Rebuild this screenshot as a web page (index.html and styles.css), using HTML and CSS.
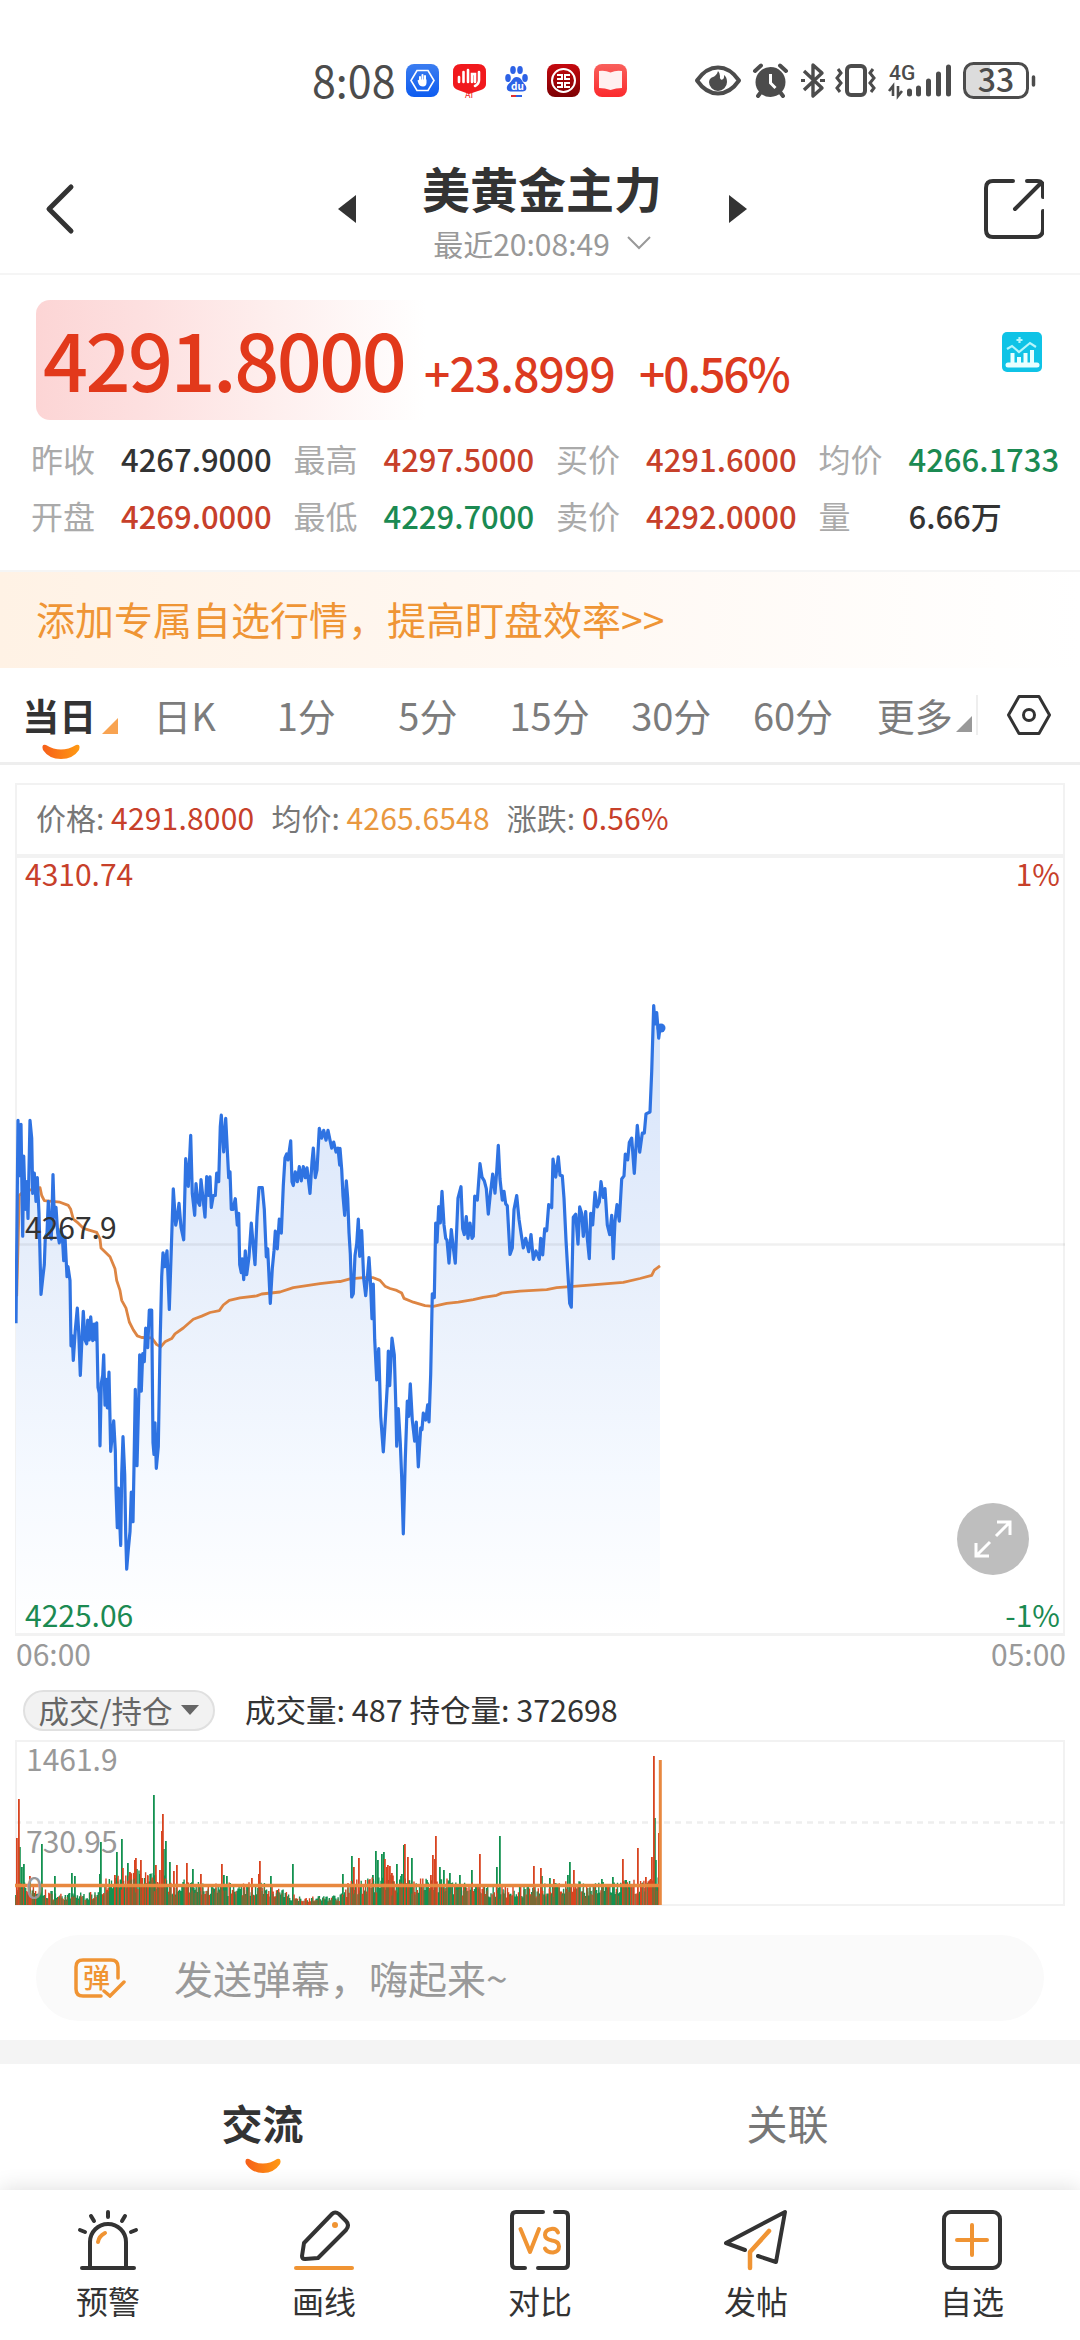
FILE: index.html
```html
<!DOCTYPE html>
<html lang="zh-CN">

<head>
    <meta charset="UTF-8">
    <meta name="viewport" content="width=device-width, initial-scale=1.0">
    <title>美黄金主力</title>
    <link rel="stylesheet" href="styles.css">
</head>

<body>
    <div class="status-bar">
        <span class="clock">8:08</span>
        <svg class="status-icons" width="680" height="50" viewBox="400 56 680 50">
            <defs>
                <linearGradient id="gBlue" x1="0" y1="0" x2="0" y2="1">
                    <stop offset="0" stop-color="#3b7df0" />
                    <stop offset="1" stop-color="#0d5cf0" />
                </linearGradient>
                <linearGradient id="gDark" x1="0" y1="0" x2="0" y2="1">
                    <stop offset="0" stop-color="#c5090f" />
                    <stop offset="1" stop-color="#7c0003" />
                </linearGradient>
                <linearGradient id="gRed" x1="0" y1="0" x2="0" y2="1">
                    <stop offset="0" stop-color="#f9605c" />
                    <stop offset="1" stop-color="#fb2a2d" />
                </linearGradient>
            </defs>
            <!-- app notifications -->
            <rect x="406" y="64" width="33" height="33" rx="8" fill="url(#gBlue)" />
            <path d="M417 70.500h11l6 10-6 10h-11l-6-10z" fill="none" stroke="#fff" stroke-width="1.600" />
            <path d="M420 80v-3M422.500 80v-5M425 80v-4" stroke="#fff" stroke-width="2" stroke-linecap="round" />
            <path d="M417.500 80.500l2-1h7v3q0 4-3.500 4t-4.500-3z" fill="#fff" />
            <path d="M461 64h17q8 0 8 8v12q0 4-5 6l-12 4-11-4q-5-2-5-6V72q0-8 8-8z" fill="#f1191d" />
            <path d="M459 82v-5M463.500 82V72M468 82V70M472 82v-8h3v8M479 72v8q0 4-4 6" fill="none" stroke="#fff"
                stroke-width="2.600" stroke-linecap="round" />
            <text x="465" y="98" class="tiny-ai">AI</text>
            <g fill="#2d62e6">
                <ellipse cx="508" cy="78" rx="2.800" ry="4" />
                <ellipse cx="513" cy="70" rx="2.800" ry="4" />
                <ellipse cx="520" cy="70" rx="2.800" ry="4" />
                <ellipse cx="525" cy="78" rx="2.800" ry="4" />
                <path d="M516.500 77c5 0 5 4 8 7 4 5 1 8-3 7.500h-10c-5 0-6-4-3-7.500 4-3 4-7 8-7z" />
            </g>
            <text x="511" y="90" class="tiny-du">du</text>
            <path d="M511 96h5" stroke="#e03030" stroke-width="2" />
            <path d="M516 96h6" stroke="#2d62e6" stroke-width="2" />
            <rect x="547" y="64" width="33" height="33" rx="8" fill="url(#gDark)" />
            <circle cx="563.500" cy="80.500" r="11.500" fill="none" stroke="#fff" stroke-width="2" />
            <path d="M557 75h5v4h-5M570 75h-5v4h5M557 87h5v-4h-5M570 87h-5v-4h5" fill="none" stroke="#fff"
                stroke-width="2" />
            <rect x="594" y="64" width="33" height="33" rx="8" fill="url(#gRed)" />
            <path d="M599 71q6-1 11.500 1.500Q616 70 622 71v17q-6 0-11.500 2Q605 88 599 88z" fill="#fff0f0" />

            <!-- system icons -->
            <path d="M697 80.500q9-13 21-13t21 13q-9 13-21 13t-21-13z" fill="none" stroke="#4c4c4c" stroke-width="4"
                stroke-linejoin="round" />
            <path d="M718 71c-2 8-8 4-9 11a9 9 0 0 0 18 0q0-5-3-7c1 6-5 6-4 1q0-3-2-5z" fill="#4c4c4c" />
            <circle cx="770.500" cy="82" r="15" fill="#4c4c4c" />
            <path d="M755 71l6-5.500M786 71l-6-5.500M761 92l-3 4M780 92l3 4" stroke="#4c4c4c" stroke-width="4"
                stroke-linecap="round" />
            <path d="M770.500 74v9l5 5" fill="none" stroke="#fff" stroke-width="3" />
            <path d="M804 71l18 17-9 8V65l9 8-18 17" fill="none" stroke="#4c4c4c" stroke-width="3.400"
                stroke-linejoin="round" />
            <path d="M801 80.500h4M820 80.500h5" stroke="#4c4c4c" stroke-width="3" />
            <rect x="847" y="66" width="18" height="29" rx="4" fill="none" stroke="#4c4c4c" stroke-width="4" />
            <path d="M838 69l3 4-4 5 4 5-4 5 3 4M873 69l-3 4 4 5-4 5 4 5-3 4" fill="none" stroke="#4c4c4c"
                stroke-width="3" />
            <text x="889" y="80" class="net">4G</text>
            <path d="M893 96V86l-4 5M898 86v10l4-5" fill="none" stroke="#4c4c4c" stroke-width="2.600" />
            <path d="M909.500 91v3M918.500 88v6M928.500 81v13M938.500 74v20M948.500 67v27" stroke="#4c4c4c"
                stroke-width="5" stroke-linecap="round" />
            <path d="M973 65h17v31h-17q-7 0-7-7V72q0-7 7-7z" fill="#dcdcdc" />
            <rect x="964.500" y="63.500" width="63" height="34" rx="9" fill="none" stroke="#4c4c4c" stroke-width="3" />
            <path d="M1033.500 77v8" stroke="#4c4c4c" stroke-width="3.500" stroke-linecap="round" />
            <text x="996" y="92" class="battery">33</text>
        </svg>
    </div>

    <header class="header">
        <svg class="back" width="34" height="54" viewBox="0 0 34 54">
            <path d="M29 5L7 27l22 22" fill="none" stroke="#333" stroke-width="5" stroke-linecap="round"
                stroke-linejoin="round" />
        </svg>
        <div class="switcher">
            <svg width="18" height="28" viewBox="0 0 18 28">
                <path d="M18 0v28L0 14z" fill="#333" />
            </svg>
            <div class="title">
                <h1>美黄金主力</h1>
                <p>最近20:08:49
                    <svg width="24" height="14" viewBox="0 0 24 14">
                        <path d="M1 1l11 11L23 1" fill="none" stroke="#999" stroke-width="2" />
                    </svg>
                </p>
            </div>
            <svg width="18" height="28" viewBox="0 0 18 28">
                <path d="M0 0v28l18-14z" fill="#333" />
            </svg>
        </div>
        <svg class="share" width="60" height="60" viewBox="0 0 60 60">
            <path d="M29 2H9Q2 2 2 9v42q0 7 7 7h42q8 0 8-8V32M43 2h10q6 0 6 6v10M57 4L31 30" fill="none"
                stroke="#333" stroke-width="4" stroke-linecap="round" stroke-linejoin="round" />
        </svg>
    </header>

    <section class="quote">
        <div class="quote-main">
            <span class="price">4291.8000</span>
            <span class="change">+23.8999</span>
            <span class="percent">+0.56%</span>
            <svg class="quote-icon" width="40" height="40" viewBox="0 0 40 40">
                <rect width="40" height="40" rx="5" fill="#0fc3e6" />
                <path d="M6 33h29" stroke="#e8ffff" stroke-width="5" stroke-linecap="round" />
                <path d="M10.500 33V21M17 33v-8M23.500 33V21M30 33V18" stroke="#e8ffff" stroke-width="4" />
                <path d="M5 17l5-3 7 6 11-9 6 4M17.500 5v6M14.500 8h6" fill="none" stroke="#b5f5fb"
                    stroke-width="2.200" />
            </svg>
        </div>
        <div class="stats">
            <span>昨收</span><b>4267.9000</b>
            <span>最高</span><b class="up">4297.5000</b>
            <span>买价</span><b class="up">4291.6000</b>
            <span>均价</span><b class="down">4266.1733</b>
            <span>开盘</span><b class="up">4269.0000</b>
            <span>最低</span><b class="down">4229.7000</b>
            <span>卖价</span><b class="up">4292.0000</b>
            <span>量</span><b>6.66万</b>
        </div>
    </section>

    <div class="banner">添加专属自选行情，提高盯盘效率&gt;&gt;</div>

    <nav class="periods">
        <div class="period active">当日<i class="corner"></i>
            <svg class="smile" width="40" height="18" viewBox="0 0 40 18">
                <path d="M2 7Q0 1 5 2q15 9 30 0 5-1 3 5-6 9-18 9T2 7z" fill="url(#gSmile)" />
                <defs>
                    <linearGradient id="gSmile" x1="0" y1="0" x2="1" y2="0">
                        <stop offset="0" stop-color="#f65f1a" />
                        <stop offset="1" stop-color="#ff9a12" />
                    </linearGradient>
                </defs>
            </svg>
        </div>
        <div class="period">日K</div>
        <div class="period">1分</div>
        <div class="period">5分</div>
        <div class="period">15分</div>
        <div class="period">30分</div>
        <div class="period">60分</div>
        <div class="period more">更多<i class="corner"></i></div>
        <svg class="settings" width="46" height="42" viewBox="0 0 46 42">
            <path d="M13 2.500h20L43.500 21 33 39.500H13L2.500 21z" fill="none" stroke="#333" stroke-width="3"
                stroke-linejoin="round" />
            <circle cx="23" cy="21" r="5.500" fill="none" stroke="#333" stroke-width="3" />
        </svg>
    </nav>

    <section class="chart-info">
        <span>价格: <em class="up">4291.8000</em></span>
        <span>均价: <em class="avg">4265.6548</em></span>
        <span>涨跌: <em class="up">0.56%</em></span>
    </section>

    <section class="price-chart">
        <svg id="priceSvg" width="1050" height="775" viewBox="15 858 1050 775">
            <defs>
                <linearGradient id="gArea" gradientUnits="userSpaceOnUse" x1="0" y1="1000" x2="0" y2="1634">
                    <stop offset="0" stop-color="#d6e4fb" />
                    <stop offset=".4" stop-color="#e6eefb" />
                    <stop offset=".75" stop-color="#f5f9ff" />
                    <stop offset="1" stop-color="#fff" />
                </linearGradient>
            </defs>
            <path id="area" fill="url(#gArea)" />
            <path d="M15 1244.500h1050" stroke="#000" stroke-opacity=".06" stroke-width="2.500" />
            <path id="avgLine" fill="none" stroke="#dd8543" stroke-width="2.800" stroke-linejoin="round" />
            <path id="priceLine" fill="none" stroke="#2f73e2" stroke-width="3.200" stroke-linejoin="round" />
            <circle cx="661" cy="1028" r="4.500" fill="#2f73e2" />
        </svg>
        <span class="label up top-left">4310.74</span>
        <span class="label up top-right">1%</span>
        <span class="label middle">4267.9</span>
        <span class="label down bottom-left">4225.06</span>
        <span class="label down bottom-right">-1%</span>
        <div class="fullscreen">
            <svg width="40" height="40" viewBox="0 0 40 40">
                <path d="M23 17L36 4M24 3h13v13M17 23L4 36M3 24v13h13" fill="none" stroke="#fff" stroke-width="3" />
            </svg>
        </div>
    </section>
    <div class="time-axis"><span>06:00</span><span>05:00</span></div>

    <div class="volume-head">
        <div class="pill">成交/持仓
            <svg width="18" height="10" viewBox="0 0 18 10">
                <path d="M0 0h18L9 10z" fill="#666" />
            </svg>
        </div>
        <span>成交量: 487 持仓量: 372698</span>
    </div>

    <section class="volume-chart">
        <svg width="1050" height="163" viewBox="15 1742 1050 163">
            <path d="M15 1822.500h1050" stroke="#eee" stroke-width="2.500" stroke-dasharray="6 5" />
            <path id="volGreen" fill="#139150" />
            <path id="volRed" fill="#d84420" />
            <path id="volMix" fill="#7a6a35" />
            <path d="M15 1885.500h646" stroke="#e8883f" stroke-width="3.500" />
            <path d="M660.300 1905V1760" stroke="#e8883f" stroke-width="3" />
        </svg>
        <span class="label v-max">1461.9</span>
        <span class="label v-mid">730.95</span>
        <span class="label v-min">0</span>
    </section>

    <div class="danmu">
        <svg width="52" height="40" viewBox="0 0 52 40">
            <path d="M44 20V9q0-7-7-7H9Q2 2 2 9v22q0 7 7 7h18" fill="none" stroke="#f09433" stroke-width="3.500"
                stroke-linecap="round" />
            <path d="M30 33l6 5 14-14" fill="none" stroke="#f09433" stroke-width="3.500" stroke-linecap="round" />
            <text x="9" y="30" class="danmu-char">弹</text>
        </svg>
        <span>发送弹幕，嗨起来~</span>
    </div>

    <div class="divider"></div>

    <div class="social-tabs">
        <div class="social-tab active">交流
            <svg class="smile" width="40" height="18" viewBox="0 0 40 18">
                <path d="M3 7Q1 1 6 2q14 9 28 0 5-1 3 5-6 9-17 9T3 7z" fill="url(#gSmile)" />
            </svg>
        </div>
        <div class="social-tab">关联</div>
    </div>

    <footer class="toolbar">
        <div class="tool">
            <svg width="64" height="62" viewBox="0 0 64 62">
                <g fill="none" stroke="#333" stroke-width="4" stroke-linecap="round">
                    <path d="M14 59V33a18 18 0 0 1 36 0v26M6 59h52M32 3v5M15 7l3 5M49 7l-3 5M4 21l5 2M60 21l-5 2" />
                    <path d="M22 33q1-6 7-9" stroke="#f09433" />
                </g>
            </svg>
            <span>预警</span>
        </div>
        <div class="tool">
            <svg width="64" height="62" viewBox="0 0 64 62">
                <path d="M12 34L40 5q3-3 7 0l7 7q4 4 0 9L26 49l-13 1q-3 0-3-3z" fill="none" stroke="#333"
                    stroke-width="4" stroke-linejoin="round" />
                <circle cx="43" cy="16" r="3" fill="#f09433" />
                <path d="M4 59h56" stroke="#f09433" stroke-width="4" stroke-linecap="round" />
            </svg>
            <span>画线</span>
        </div>
        <div class="tool">
            <svg width="64" height="62" viewBox="0 0 64 62">
                <path d="M35 3H8q-4 0-4 4v48q0 4 4 4h9M47 3h9q4 0 4 4v48q0 4-4 4H30" fill="none" stroke="#333"
                    stroke-width="4" stroke-linecap="round" />
                <path d="M12.500 20L22 43l9-23M50 23.500Q48 19 43 20q-6 1-6 6 0 4 7 5.500 7 1 7 6 0 5-6 6-6 0-8-4"
                    fill="none" stroke="#f09433" stroke-width="4" stroke-linecap="round" stroke-linejoin="round" />
            </svg>
            <span>对比</span>
        </div>
        <div class="tool">
            <svg width="64" height="62" viewBox="0 0 64 62">
                <path d="M21 41L2 34 61 3l-9 50-18-6" fill="none" stroke="#333" stroke-width="4"
                    stroke-linecap="round" stroke-linejoin="round" />
                <path d="M45 22L26 43v16" fill="none" stroke="#f09433" stroke-width="4.500" stroke-linecap="round"
                    stroke-linejoin="round" />
            </svg>
            <span>发帖</span>
        </div>
        <div class="tool">
            <svg width="64" height="62" viewBox="0 0 64 62">
                <rect x="4" y="3" width="56" height="56" rx="7" fill="none" stroke="#333" stroke-width="4" />
                <path d="M32 16v30M17 31h30" stroke="#f09433" stroke-width="4" stroke-linecap="round" />
            </svg>
            <span>自选</span>
        </div>
    </footer>

    <script src="chart.js"></script>
</body>

</html>
```
FILE: styles.css
```css
body {
    font-family: "Noto Sans CJK SC", "Noto Sans", sans-serif;
    background-color: #fff;
    color: #333;
    margin: 0;
    width: 1080px;
    height: 2340px;
    overflow: hidden;
}

svg {
    display: block;
    flex: none;
}

.up {
    color: #c7402a;
}

.down {
    color: #1b8a52;
}

.status-bar {
    display: flex;
    align-items: center;
    height: 50px;
    padding: 56px 0 24px 312px;
}

.clock {
    width: 88px;
    font-size: 43px;
    line-height: 46px;
    color: #4c4c4c;
    padding-bottom: 4px;
}

.tiny-ai {
    font-size: 9px;
    fill: #f1191d;
}

.tiny-du {
    font-size: 10px;
    font-weight: bold;
    fill: #fff;
}

.net {
    font-family: Roboto, sans-serif;
    font-size: 21px;
    font-weight: 500;
    fill: #4c4c4c;
}

.battery {
    font-size: 32px;
    font-weight: 500;
    text-anchor: middle;
    fill: #4c4c4c;
}

/* header */
.header {
    display: flex;
    align-items: center;
    justify-content: space-between;
    height: 143px;
    padding: 0 36px 0 42px;
    border-bottom: 2px solid #f5f5f5;
}

.back,
.share {
    margin-top: 15px;
}

.switcher {
    display: flex;
    align-items: center;
    gap: 66px;
    margin-left: 24px;
}

.switcher>svg {
    margin-top: 14px;
}

.title {
    width: 241px;
    padding-top: 18px;
    text-align: center;
}

.title h1 {
    margin: 0;
    font-size: 48px;
    line-height: 60px;
    white-space: nowrap;
}

.title p {
    display: flex;
    align-items: center;
    justify-content: center;
    gap: 17px;
    margin: 0;
    padding-top: 4px;
    font-size: 30px;
    line-height: 44px;
    color: #999;
    white-space: nowrap;
}

/* quote */
.quote {
    height: 270px;
    padding-top: 25px;
    border-bottom: 2px solid #f5f5f5;
}

.quote-main {
    display: flex;
    align-items: baseline;
    height: 120px;
    margin: 0 36px;
    border-radius: 14px;
    background: linear-gradient(to right, #fcd5d5 0, #fddfdf 100px, #feefee 240px, #fff 390px);
    color: #dc3a20;
    font-weight: 500;
}

.price {
    width: 388px;
    padding-left: 7px;
    box-sizing: border-box;
    font-size: 79px;
    line-height: 115px;
    letter-spacing: -2.500px;
    color: #e2391b;
}

.change {
    width: 215px;
    font-size: 46px;
    line-height: 60px;
    letter-spacing: -0.800px;
}

.percent {
    font-size: 46px;
    line-height: 60px;
    letter-spacing: -2px;
}

.change,
.percent {
    margin-top: 0;
}

.quote-icon {
    align-self: flex-start;
    margin: 32px 2px 0 auto;
}

.stats {
    display: grid;
    grid-template-columns: repeat(4, 90px 172.500px);
    grid-auto-rows: 57px;
    align-items: center;
    padding: 10px 0 0 31px;
    font-size: 32px;
    line-height: 57px;
    white-space: nowrap;
}

.stats span {
    color: #aaa;
}

.stats b {
    font-size: 31px;
    font-weight: 500;
}

.banner {
    height: 96px;
    padding-left: 36px;
    font-size: 39px;
    line-height: 93px;
    color: #ef9535;
    background: linear-gradient(to right, #fff2e5, #fff8f2 50%, #fff);
}

/* period tabs */
.periods {
    display: flex;
    align-items: center;
    height: 94px;
    padding-left: 2px;
    border-bottom: 3px solid #eee;
}

.period {
    position: relative;
    width: 121.700px;
    font-size: 38px;
    line-height: 92px;
    text-align: center;
    color: #7c7c7c;
}

.period.active {
    color: #333;
    font-weight: bold;
    font-size: 37px;
    text-indent: -7px;
}

.corner {
    position: absolute;
    right: 6px;
    bottom: 27px;
    border-left: 16px solid transparent;
    border-bottom: 16px solid #f8a351;
}

.more {
    border-right: 2px solid #eee;
    line-height: 40px;
    height: 40px;
}

.more .corner {
    right: 4px;
    bottom: 3px;
    border-bottom-color: #999;
}

.smile {
    position: absolute;
    left: 50%;
    margin-left: -20px;
}

.period .smile {
    left: 59px;
    bottom: 0;
}

.settings {
    margin-left: 28px;
}

/* chart */
.chart-info {
    display: flex;
    gap: 17px;
    margin: 18px 15px 0;
    height: 69px;
    padding-left: 19px;
    border: 2px solid #f2f2f2;
    border-bottom: 0;
    font-size: 30px;
    line-height: 65px;
    color: #777;
    white-space: pre;
}

.chart-info em {
    font-style: normal;
    letter-spacing: 0.200px;
}

.avg {
    color: #e9983f;
}

.price-chart {
    position: relative;
    margin: 0 15px;
    height: 775px;
    border: 2px solid #f2f2f2;
    border-top-width: 4px;
    border-bottom-width: 3px;
}

.price-chart>svg,
.volume-chart>svg {
    position: absolute;
    left: -2px;
    top: 0;
}

.label {
    position: absolute;
    font-size: 30px;
    line-height: 30px;
}

.top-left {
    left: 8px;
    top: 0;
}

.top-right {
    right: 3px;
    top: 0;
}

.middle {
    left: 8px;
    top: 353px;
}

.bottom-left {
    left: 8px;
    bottom: 4px;
}

.bottom-right {
    right: 3px;
    bottom: 4px;
}

.fullscreen {
    position: absolute;
    right: 34px;
    bottom: 58px;
    display: flex;
    align-items: center;
    justify-content: center;
    width: 72px;
    height: 72px;
    border-radius: 50%;
    background: #bebebe;
}

.time-axis {
    display: flex;
    justify-content: space-between;
    margin: 0 14px 0 16px;
    font-size: 30px;
    line-height: 34px;
    color: #999;
}

.volume-head {
    display: flex;
    align-items: center;
    gap: 30px;
    height: 44px;
    margin: 18px 0 8px 23px;
    font-size: 30.500px;
}

.volume-head>span {
    padding-bottom: 3px;
}

.pill {
    display: flex;
    align-items: center;
    justify-content: center;
    gap: 9px;
    width: 188px;
    height: 37px;
    line-height: 34px;
    border: 2px solid #e0e0e0;
    border-radius: 22px;
    background: #f2f2f2;
    color: #666;
}

.volume-chart {
    position: relative;
    margin: 0 15px;
    height: 162px;
    border: 2px solid #f2f2f2;
}

.volume-chart .label {
    left: 9px;
    color: #999;
}

.v-max {
    top: 1px;
}

.v-mid {
    top: 83px;
}

.v-min {
    top: 129px;
}

.danmu {
    display: flex;
    align-items: center;
    gap: 48px;
    height: 86px;
    margin: 29px 36px 19px;
    padding-left: 38px;
    border-radius: 43px;
    background: #fafafa;
    font-size: 39px;
    line-height: 82px;
    color: #999;
}

.danmu span {
    padding-bottom: 2px;
}

.danmu-char {
    font-size: 27px;
    fill: #f09433;
    font-weight: 500;
}

.divider {
    height: 24px;
    background: #f4f4f4;
}

.social-tabs {
    display: flex;
    height: 126px;
    padding: 0 30px 0 0;
}

.social-tab {
    position: relative;
    flex: 1;
    font-size: 41px;
    line-height: 116px;
    text-align: center;
    color: #777;
}

.social-tab.active {
    font-weight: bold;
    color: #333;
}

.social-tab .smile {
    bottom: 15px;
}

/* bottom toolbar */
.toolbar {
    display: flex;
    height: 150px;
    position: relative;
    background: #fff;
    box-shadow: 0 -2px 20px rgba(0, 0, 0, 0.12);
}

.tool {
    display: flex;
    flex: 1;
    flex-direction: column;
    align-items: center;
    padding-top: 19px;
    font-size: 32px;
    line-height: 40px;
}

.tool svg {
    margin-bottom: 9px;
}
```
FILE: chart.js
```javascript
// Intraday ticks as x,y pairs, each half with its own origin and scale
const halves = [
    {
        x0: 0, kx: 3, ky: 2.529,
        price: '48,868 54,355 58,495 63,365 68,648 71,445 76,580 80,510 84,603 90,355 95,400 98,540 103,488 108,560 112,500 117,590 123,795 128,755 133,720 136,650 141,640 145,560 150,645 154,655 159,492 163,600 168,575 173,640 178,665 183,630 188,665 191,710 195,650 201,750 204,725 210,760 213,925 217,900 220,962 226,885 232,830 236,890 241,1000 246,905 250,838 255,910 260,920 263,860 268,910 272,852 278,912 283,870 287,910 290,867 294,1030 298,1045 300,1178 304,1020 308,1000 311,948 315,1075 319,1010 322,1082 327,992 332,1192 337,1150 341,1115 346,1190 348,1290 352,1385 355,1285 362,1430 365,1250 369,1155 374,1250 377,1400 380,1490 385,1440 390,1395 394,1295 399,1370 402,1230 406,1035 411,1228 416,1060 419,948 424,1040 428,945 433,965 437,880 443,930 448,835 455,835 459,1170 462,1200 465,1120 469,1235 475,1180 480,930 485,750 489,690 494,725 501,685 508,833 514,680 520,528 527,620 532,600 537,565 543,625 551,657 557,452 565,522 572,393 577,540 584,595 588,515 593,560 599,570 603,505 608,545 615,600 620,497 626,545 630,498 634,575 640,545 646,545 650,488 656,510 661,370 664,342 671,435 677,350 682,430 686,500 690,485 694,580 699,580 706,553 712,620 716,590 719,720 724,740 727,705 731,758 736,685 740,745 747,700 754,615 759,665 765,720 771,600 777,525 787,525 793,580 799,700 803,680 811,818 817,730 822,685 826,635 832,680 838,605 844,640 850,520 855,450 860,440 864,455 872,407 876,510 880,520 886,485 892,510 898,472 904,508 910,472 916,500 921,475 930,540 936,460 940,425 946,500 951,480 958,375 965,400 971,380 978,405 984,380 990,405 995,425 1001,410 1008,435 1014,425 1019,468',
        avg: '50,800 58,545 70,535 95,530 120,525 125,545 133,558 180,562 205,570 212,580 220,605 235,615 250,628 290,638 300,655 303,678 330,700 345,730 350,760 360,785 365,810 378,830 388,865 400,885 412,900 425,904 455,905 470,922 482,928 495,915 515,907 525,895 550,880 580,858 605,850 630,841 658,836 670,822 688,810 720,804 770,799 785,794 840,789 880,778 960,768 1019,762'
    },
    {
        x0: 330, kx: 3, ky: 2.613,
        price: '30,440 35,495 39,565 44,615 49,525 53,570 57,660 61,715 65,828 70,820 75,720 80,690 85,625 89,722 95,655 101,780 107,825 112,780 117,725 121,780 126,885 130,795 134,940 140,1045 146,963 152,1140 160,1233 166,1150 172,1060 175,970 179,1060 186,936 193,980 197,1100 200,1218 205,1120 211,1210 215,1300 220,1447 226,1250 232,1100 236,1140 241,1055 247,1150 254,1205 259,1155 265,1272 272,1170 276,1175 280,1132 287,1150 293,1110 297,1155 302,1030 307,820 313,830 317,635 321,685 326,592 331,635 336,552 342,640 347,675 351,680 357,740 364,652 370,700 376,740 384,570 393,540 398,650 403,665 409,618 414,675 420,635 426,675 430,670 434,565 442,575 450,480 456,515 463,525 469,545 475,612 481,560 488,507 495,557 500,500 505,432 510,520 517,575 522,552 527,585 532,590 540,717 547,700 552,600 560,563 567,625 572,655 580,700 587,675 596,710 603,665 610,730 618,708 628,730 632,675 638,718 644,650 650,655 656,587 665,595 669,468 677,515 685,462 690,510 697,512 702,570 708,680 714,770 719,845 724,855 730,620 737,612 744,690 749,593 755,610 760,670 767,605 772,675 778,728 782,610 788,640 795,555 802,593 808,580 813,527 820,568 825,545 832,640 839,665 845,615 850,728 855,630 861,587 868,630 875,520 882,512 886,455 893,470 898,425 905,413 913,505 922,380 929,450 937,400 943,400 948,350 960,345 965,240 971,67 975,115 980,85 986,152 990,125',
        avg: '30,788 60,781 100,778 130,778 150,785 165,800 180,806 200,811 215,818 222,832 250,842 285,851 310,853 350,845 385,842 430,835 460,829 500,824 515,818 570,813 650,809 680,804 740,800 880,790 930,780 965,772 973,758 990,747'
    }
];

function points(key) {
    return halves.flatMap(h => h[key].split(' ').map(p => {
        const [x, y] = p.split(',');
        return (h.x0 + x / h.kx).toFixed(1) + ' ' + (980 + y / h.ky).toFixed(1);
    })).join('L');
}

const price = points('price');
document.getElementById('priceLine').setAttribute('d', 'M' + price);
document.getElementById('avgLine').setAttribute('d', 'M' + points('avg'));
document.getElementById('area').setAttribute('d', 'M16 1634L' + price + 'L660 1634Z');

// Volume bars
const BOTTOM = 1905;
const bars = { r: '', g: '', m: '' };
function bar(color, x, h, w) {
    bars[color] += `M${x.toFixed(1)} ${BOTTOM}v${-h.toFixed(1)}h${w}V${BOTTOM}z`;
}

// [x, typical height]
const levels = [[15, 22], [45, 14], [60, 10], [90, 11], [105, 22], [140, 30], [180, 22], [215, 18], [240, 20], [270, 18], [290, 10], [305, 7], [340, 9], [350, 22], [400, 26], [450, 22], [480, 18], [510, 16], [560, 20], [600, 20], [640, 22], [664, 24]];
function level(x) {
    const i = levels.findIndex(l => l[0] > x);
    const [a, b] = [levels[i - 1], levels[i]];
    return a[1] + (b[1] - a[1]) * (x - a[0]) / (b[0] - a[0]);
}

let seed = 7;
function rand() {
    seed = (seed * 16807) % 2147483647;
    return seed / 2147483647;
}

for (let x = 15.1; x < 659; x += 1.1) {
    const h = level(x) * (0.45 + rand() * 0.75);
    const c = rand();
    bar(c < 0.36 ? 'r' : 'g', x, h, 1.4);
    if (rand() < 0.4) bar('m', x, h * 0.8, 1.2);
}

const spikes = 'r16,67 r18,106 g19,58 g21,38 g23,41 g41,61 g54,29 g71,32 g74,29 r29,29 g99,31 g100,63 r114,30 g116,53 r117,27 g121,66 r122,37 g127,42 r129,33 r134,45 r135,47 g136,36 r140,45 r147,29 g153,110 r155,40 r159,35 r161,74 r162,91 g163,56 g165,64 g169,43 r173,34 r176,40 r186,42 g192,36 r200,31 r221,41 g223,30 g226,29 r251,27 r258,31 r259,44 g270,29 g292,41 g342,31 g351,49 r353,38 r358,47 g372,30 g375,54 g377,45 g381,51 g383,53 r384,46 r386,38 r387,40 r389,39 r391,32 g396,41 g401,31 g403,60 r404,61 r407,48 g411,47 r430,30 r432,50 r434,46 r435,69 g439,38 g443,35 g449,32 g459,30 g471,35 r479,51 g496,38 g499,69 r533,39 r540,37 g541,29 g549,27 r553,26 g567,30 g569,43 r573,35 g601,26 g612,28 r622,46 r637,57 r645,28 r651,48 r653,149 g654,87 g655,45 r658,72';
spikes.split(' ').forEach(s => {
    const [x, h] = s.slice(1).split(',').map(Number);
    bar(s[0], x, h, 1.8);
});

document.getElementById('volRed').setAttribute('d', bars.r);
document.getElementById('volGreen').setAttribute('d', bars.g);
document.getElementById('volMix').setAttribute('d', bars.m);
```
